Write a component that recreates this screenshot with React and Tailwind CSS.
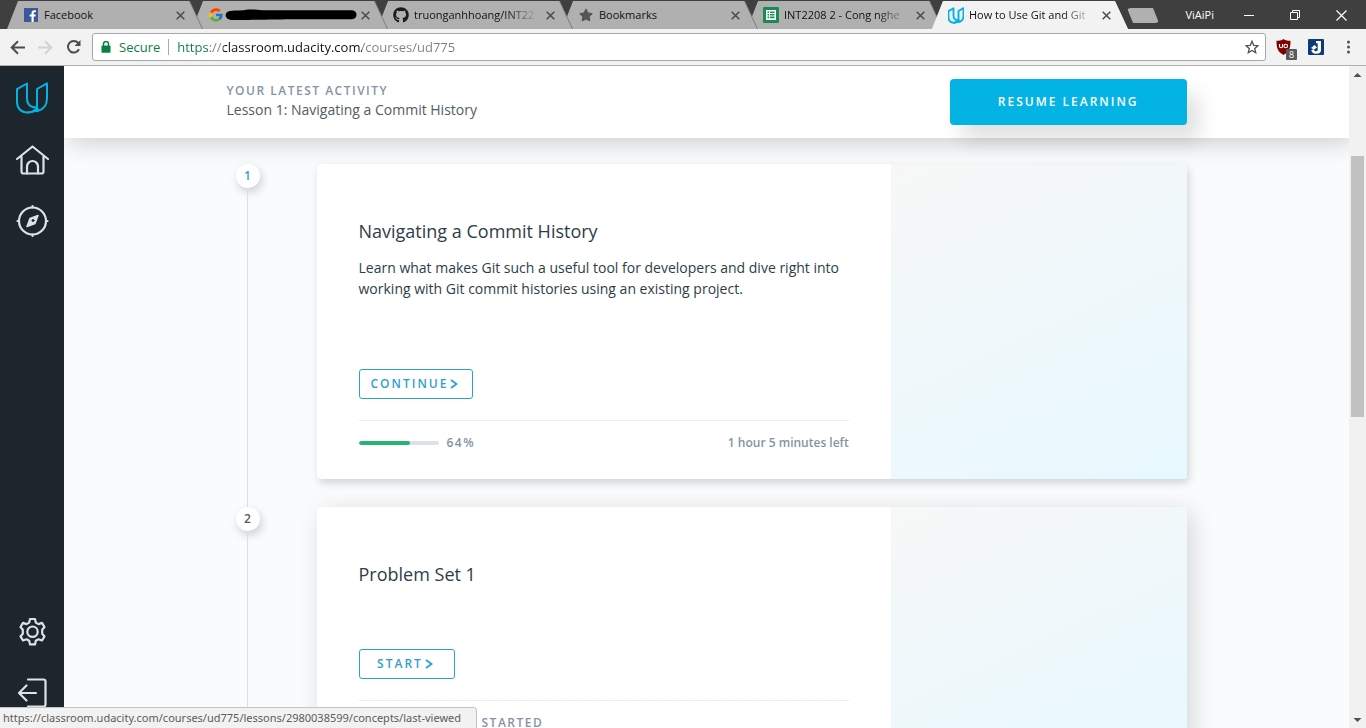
import React from "react";
import { FaGithub, FaStar } from "react-icons/fa";
import { FcGoogle } from "react-icons/fc";

function FacebookIcon() {
  return (
    <svg width="14" height="14" viewBox="0 0 14 14" aria-hidden="true">
      <rect width="14" height="14" fill="#3b5998" />
      <path d="M9.7 14V8.6h1.8l.3-2.1H9.7V5.2c0-.6.2-1 1-1h1.2V2.3c-.2 0-.9-.1-1.6-.1-1.7 0-2.8 1-2.8 2.8v1.5H5.6v2.1h1.9V14z" fill="#fff" />
    </svg>
  );
}

function SheetsIcon() {
  return (
    <svg width="16" height="16" viewBox="0 0 16 16" aria-hidden="true">
      <rect width="16" height="16" rx="1" fill="#188a52" />
      <rect x="3" y="3" width="10" height="10" fill="#fff" />
      <path d="M4.500 4.500h1.500v1.500h-1.500zM7 4.500h4.500v1.500H7zM4.500 7h1.500v1.500h-1.500zM7 7h4.500v1.500H7zM4.500 9.600h1.500v1.600h-1.500zM7 9.600h4.500v1.600H7z" fill="#188a52" />
    </svg>
  );
}

function UdacityMark({ size, stroke }) {
  return (
    <svg width={size} height={size} viewBox="0 0 32 32" fill="none" stroke="#02b3e4" strokeWidth={stroke} strokeLinejoin="round" strokeLinecap="round" aria-hidden="true">
      <path d="M11 1.500v15c0 6 4 9 10 9-2 3-5.500 5-9.500 5C5 30.500 1 26 1 20V7.200z" />
      <path d="M31 1.500v15c0 6.500-3.500 11.500-10 13V7.200z" transform="translate(0 -.2)" />
      <path d="M11.500 30.500c6-.5 9-1.500 11-3" />
    </svg>
  );
}

const tabs = [
  { title: "Facebook", icon: <FacebookIcon /> },
  { title: "", icon: <FcGoogle size={16} />, struck: true },
  { title: "truonganhhoang/INT22", icon: <FaGithub size={16} color="#1c1c1c" />, fade: true },
  { title: "Bookmarks", icon: <FaStar size={14} color="#555" /> },
  { title: "INT2208 2 - Cong nghe", icon: <SheetsIcon />, fade: true },
  { title: "How to Use Git and Git", icon: <UdacityMark size={17} stroke={3.8} />, fade: true, active: true },
];

const stacking = ["z-[5]", "z-[4]", "z-[3]", "z-[2]", "z-[1]", "z-[6]"];
const tabShape = "[clip-path:polygon(11px_0,calc(100%_-_13px)_0,100%_100%,0_100%)]";

function Tab({ tab, index }) {
  return (
    <div className={`relative -mr-[11px] h-7 w-[196px] min-w-0 ${tabShape} ${stacking[index]} ${tab.active ? "bg-[#f2f2f2]" : "bg-[#7c7c7c]"}`}>
      <div className={`flex h-full items-center pr-[17px] pl-4 ${tabShape} ${tab.active ? "bg-[#f2f2f2]" : "mr-px bg-[#b0b0b0]"}`}>
        <button type="button" aria-label={tab.title || "Google"} className="flex min-w-0 flex-1 items-center gap-[5px] text-left">
          <span className="flex w-4 shrink-0 justify-center">{tab.icon}</span>
          {tab.struck ? (
            <svg width="134" height="12" viewBox="0 0 134 12" className="-mr-1 -ml-1 shrink-0" aria-hidden="true">
              <path d="M5 2c6-1 12 0 18-1.500 8-.5 10 .8 18 .8h86c6 0 6 9 0 9H60c-6 .5-10 0-16 .2-8 .5-14-.2-20 .6H6C-1 10-1 3 5 2z" fill="#000" />
            </svg>
          ) : (
            <span className={`min-w-0 flex-1 text-[11px] whitespace-nowrap text-[#111] ${tab.fade ? "[mask-image:linear-gradient(to_right,#000_75%,transparent)]" : ""}`}>
              {tab.title}
            </span>
          )}
        </button>
        <button type="button" aria-label="Close tab" className="ml-2 shrink-0">
          <svg width="9" height="9" viewBox="0 0 9 9" stroke="#4a4a4a" strokeWidth="1.500" aria-hidden="true">
            <path d="M.7.7l7.600 7.600M8.300.7L.7 8.300" />
          </svg>
        </button>
      </div>
    </div>
  );
}

function TabStrip() {
  return (
    <div className="flex h-[29px] shrink-0 items-start bg-[#3f3f3f] pt-px pl-[7px]">
      {tabs.map((tab, i) => (
        <Tab key={i} tab={tab} index={i} />
      ))}
      <button type="button" aria-label="New tab" className="mt-[7px] ml-2.5 h-[15px] w-8 rounded-sm bg-[#b0b0b0] [clip-path:polygon(0_0,26px_0,100%_100%,6px_100%)]" />
      <div className="ml-auto flex h-full items-center pr-0.5 text-white">
        <span className="mr-3 text-[11px]">ViAiPi</span>
        <button type="button" aria-label="Minimize" className="flex w-[46px] justify-center">
          <svg width="10" height="11" viewBox="0 0 10 11" stroke="#fff"><path d="M0 5.500h10" /></svg>
        </button>
        <button type="button" aria-label="Restore" className="flex w-[46px] justify-center">
          <svg width="11" height="11" viewBox="0 0 11 11" fill="none" stroke="#fff"><path d="M.5 2.500h7v7h-7zM2.500 2.500v-2h7v7h-2" /></svg>
        </button>
        <button type="button" aria-label="Close" className="flex w-[46px] justify-center">
          <svg width="11" height="11" viewBox="0 0 11 11" stroke="#fff" strokeWidth="1.200"><path d="M.5.5l10 10M10.500.5l-10 10" /></svg>
        </button>
      </div>
    </div>
  );
}

function Toolbar() {
  return (
    <div className="flex h-[37px] shrink-0 items-center border-b border-[#b0b0b0] bg-[#f2f2f2] pl-2.5">
      <button type="button" aria-label="Back" className="flex w-7">
        <svg width="15" height="15" viewBox="0 0 15 15" fill="none" stroke="#4d4d4d" strokeWidth="2"><path d="M15 7.500H2M8 1.200L1.700 7.500 8 13.800" /></svg>
      </button>
      <button type="button" aria-label="Forward" className="flex w-7">
        <svg width="15" height="15" viewBox="0 0 15 15" fill="none" stroke="#d2d2d2" strokeWidth="2"><path d="M0 7.500h13M7 1.200l6.300 6.300L7 13.800" /></svg>
      </button>
      <button type="button" aria-label="Reload" className="flex w-[26px]">
        <svg width="16" height="16" viewBox="0 0 16 16" fill="none" stroke="#4d4d4d" strokeWidth="2"><path d="M13 10.300A5.800 5.800 0 1 1 12.200 4" /><path d="M14.500 1v6H8.500z" fill="#4d4d4d" stroke="none" /></svg>
      </button>
      <div className="flex h-7 min-w-0 flex-1 items-center rounded-[3px] border border-[#a6a6a6] bg-white pr-1.5 pl-2 text-sm">
        <svg width="10" height="12" viewBox="0 0 10 12" className="mr-2 shrink-0" aria-hidden="true">
          <path d="M2.500 5V3a2.500 2.500 0 0 1 5 0v2" fill="none" stroke="#0b8043" strokeWidth="1.500" />
          <rect x=".5" y="4.500" width="9" height="7.300" rx=".8" fill="#0b8043" />
        </svg>
        <label htmlFor="address" className="text-[13px] text-[#0b8043]">Secure</label>
        <span className="mx-2 h-4 w-px bg-[#aaa]" />
        <input
          id="address"
          type="text"
          defaultValue="https://classroom.udacity.com/courses/ud775"
          className="min-w-0 flex-1 bg-[linear-gradient(to_right,#0b8043_0_33px,#808080_33px_46px,#111_46px_185px,#808080_185px)] bg-clip-text text-[13px] text-transparent caret-black outline-none"
        />
        <button type="button" aria-label="Bookmark this page" className="shrink-0">
          <svg width="14" height="14" viewBox="0 0 14 14" fill="none" stroke="#505050" strokeWidth="1.300"><path d="M7 1.300l1.700 4 4.300.4-3.300 2.800 1 4.200L7 10.500l-3.700 2.200 1-4.200L1 5.700l4.300-.4z" /></svg>
        </button>
      </div>
      <div className="ml-2.5 flex shrink-0 items-center">
        <button type="button" aria-label="uBlock Origin" className="relative h-5 w-5">
          <svg width="15" height="16" viewBox="0 0 15 16" aria-hidden="true">
            <path d="M7.500 0c2 1.500 4.500 1.800 7 1.800 0 6.200-.5 10.700-7 14.200C1 12.500.5 8 .5 1.800c2.500 0 5-.3 7-1.800z" fill="#800000" />
            <path d="M3.500 5v2.200a1.500 1.500 0 0 0 3 0V5" fill="none" stroke="#fff" strokeWidth="1.100" />
            <circle cx="9.700" cy="7" r="1.800" fill="none" stroke="#fff" strokeWidth="1.100" />
          </svg>
          <span className="absolute top-3 left-2.5 flex h-[11px] w-[11px] items-center justify-center rounded-[1px] bg-[#5a5a5a] text-[9px] leading-none text-white">8</span>
        </button>
        <button type="button" aria-label="Extension" className="ml-3">
          <svg width="16" height="16" viewBox="0 0 16 16" aria-hidden="true">
            <rect width="16" height="16" rx="1" fill="#0c3c78" />
            <path d="M8 2h5v9.200c0 2.400-1.800 3.600-4.500 3.600-2.500 0-4.700-1-5.300-3.400L5.700 10c.3 1.700 1.300 2.300 2.300 2.300 1.200 0 1.700-.6 1.700-1.700V4.300H8z" fill="#fff" />
            <path d="M3 9l3.500-3L9 8.500l-3 2z" fill="#fff" />
          </svg>
        </button>
        <button type="button" aria-label="Menu" className="mr-4 ml-[23px]">
          <svg width="3" height="14" viewBox="0 0 3 14" fill="#505050" aria-hidden="true"><circle cx="1.500" cy="2" r="1.500" /><circle cx="1.500" cy="7" r="1.500" /><circle cx="1.500" cy="12" r="1.500" /></svg>
        </button>
      </div>
    </div>
  );
}

const sideStroke = { fill: "none", stroke: "#dbe2e8", strokeWidth: 2, strokeLinecap: "round", strokeLinejoin: "round" };

function Sidebar() {
  return (
    <nav aria-label="Main" className="flex w-16 shrink-0 flex-col items-center bg-[#1e262d] pt-4">
      <a href="#udacity" aria-label="Udacity"><UdacityMark size={32} stroke={2} /></a>
      <a href="#home" aria-label="Home" className="mt-7">
        <svg width="34" height="34" viewBox="0 0 34 34" {...sideStroke} strokeWidth="2.200">
          <path d="M2 17L17.500 4.500 33 17M6.500 14.500v15a2 2 0 0 0 2 2h18a2 2 0 0 0 2-2v-15" />
          <path d="M12 31.500v-7a5.500 5.500 0 0 1 11 0v7" />
        </svg>
      </a>
      <a href="#catalog" aria-label="Catalog" className="mt-7">
        <svg width="34" height="34" viewBox="0 0 34 34" {...sideStroke} strokeWidth="2.200">
          <circle cx="17.500" cy="17" r="13.500" />
          <path d="M17.500 2v1.500M17.500 30.500V32M2.500 17H4M31 17h1.500" />
          <path d="M23 11.500l-3 8-8 3 3-8z" fill="#dbe2e8" strokeWidth="1.500" />
          <circle cx="18" cy="16.500" r="1" fill="#1e262d" stroke="#1e262d" strokeWidth="1" />
        </svg>
      </a>
      <a href="#settings" aria-label="Settings" className="mt-auto">
        <svg width="30" height="30" viewBox="0 0 30 30" {...sideStroke} strokeWidth="2.200">
          <path d="M13 3h5l.8 3.600 2.700 1.500 3.500-1.200 2.500 4.100-2.300 2.700v4l2.300 2.700-2.500 4.100-3.500-1.200-2.700 1.500-.8 3.600h-5l-.8-3.600-2.700-1.500L6 24.500l-2.500-4.100 2.300-2.700v-4L3.500 11 6 6.900l3.500 1.200 2.700-1.500z" />
          <circle cx="15.500" cy="15.700" r="5.200" />
        </svg>
      </a>
      <a href="#signout" aria-label="Sign out" className="mt-8 mb-5">
        <svg width="30" height="30" viewBox="0 0 30 30" {...sideStroke} strokeWidth="2.200">
          <path d="M11 1.500h15.500a2 2 0 0 1 2 2v23a2 2 0 0 1-2 2H11" />
          <path d="M19 15H2M9.500 7.500L2 15l7.500 7.500" />
        </svg>
      </a>
    </nav>
  );
}

const lessons = [
  {
    title: "Navigating a Commit History",
    text: "Learn what makes Git such a useful tool for developers and dive right into working with Git commit histories using an existing project.",
    action: "CONTINUE",
    progress: 64,
    status: "64%",
    left: "1 hour 5 minutes left",
    current: true,
  },
  { title: "Problem Set 1", action: "START", progress: 0, status: "STARTED" },
];

function Lesson({ lesson, number }) {
  return (
    <li className="flex gap-12">
      <div className="flex w-[42px] shrink-0 flex-col items-center">
        <span className={`flex h-6 w-6 items-center justify-center rounded-full bg-white text-xs font-semibold shadow-[2px_4px_10px_rgba(0,0,0,0.18)] ${lesson.current ? "text-[#3a9fc4]" : "text-[#525c65]"}`}>
          {number}
        </span>
        <span className="w-px flex-1 bg-[#dbdfe3]" />
      </div>
      <div className="min-w-0 flex-1 pb-7">
        <article className={`flex overflow-hidden rounded bg-white ${lesson.current ? "shadow-[2px_4px_8px_rgba(46,61,73,0.2)]" : "shadow-[5px_5px_25px_rgba(0,0,0,0.15)]"}`}>
          <div className="flex min-w-0 flex-1 flex-col px-[42px] pt-[54px] pb-[26px]">
            <h2 className="text-lg leading-[27px] text-[#2e3d49]">{lesson.title}</h2>
            {lesson.text && <p className="mt-3 mb-[9px] text-sm leading-[21px] text-[#2e3d49]">{lesson.text}</p>}
            <button type="button" className="mt-[61px] flex h-[30px] min-w-24 items-center justify-center gap-0.5 self-start rounded-[3px] border border-[#2ea1c6] pr-3.5 pl-[11px] text-xs font-semibold tracking-[2px] text-[#2f9fce]">
              {lesson.action}
              <svg width="8" height="10" viewBox="0 0 8 10" fill="none" stroke="#2f9fce" strokeWidth="1.800" aria-hidden="true"><path d="M1 1l5.500 4L1 9" /></svg>
            </button>
            <div className="mt-[21px] flex items-center border-t border-[#ebedef] pt-3 text-xs leading-5 font-semibold text-[#8494a5]">
              <div className="mr-2 h-1 w-20 overflow-hidden rounded-full bg-[#dbe2e8]">
                <div className="h-full rounded-full bg-[#24b670]" style={{ width: `${lesson.progress}%` }} />
              </div>
              <span className={`tracking-[0.125em] ${lesson.progress ? "" : "pl-[35px]"}`}>{lesson.status}</span>
              {lesson.left && <span className="ml-auto">{lesson.left}</span>}
            </div>
          </div>
          <div className="w-[34%] shrink-0 bg-[linear-gradient(155deg,#f7f7f7,#e7f9ff)]" />
        </article>
      </div>
    </li>
  );
}

function Scrollbar() {
  return (
    <div className="flex w-[17px] shrink-0 flex-col items-center bg-[#f1f1f1]">
      <svg width="17" height="17" viewBox="0 0 17 17" aria-hidden="true"><path d="M8.500 7l4 4h-8z" fill="#505050" /></svg>
      <div className="flex w-[13px] flex-1 flex-col">
        <div className="h-[11.6%]" />
        <div className="h-[41.6%] bg-[#c1c1c1]" />
      </div>
      <svg width="17" height="17" viewBox="0 0 17 17" aria-hidden="true"><path d="M8.500 11l4-4h-8z" fill="#505050" /></svg>
    </div>
  );
}

export default function App() {
  return (
    <div className="relative flex h-screen flex-col overflow-hidden font-['Open_Sans','Noto_Sans',sans-serif]">
      <TabStrip />
      <Toolbar />
      <div className="flex min-h-0 flex-1">
        <Sidebar />
        <main className="flex min-w-0 flex-1 flex-col overflow-hidden bg-[#fafbfc]">
          <header className="relative z-10 shrink-0 bg-white shadow-[5px_5px_25px_rgba(0,0,0,0.18)]">
            <div className="mx-auto flex h-[72px] max-w-[960px] items-center justify-between">
              <div className="pb-0.5">
                <p className="text-xs leading-[18px] font-semibold tracking-[0.125em] text-[#8494a5]">YOUR LATEST ACTIVITY</p>
                <p className="text-sm leading-5 text-[#525c65]">Lesson 1: Navigating a Commit History</p>
              </div>
              <button type="button" className="h-[46px] rounded bg-[#02b3e4] px-12 text-xs font-semibold tracking-[2px] text-white shadow-[12px_15px_20px_rgba(0,0,0,0.12)]">
                RESUME LEARNING
              </button>
            </div>
          </header>
          <ol className="mx-auto w-full max-w-[960px] pt-[26px]">
            {lessons.map((lesson, i) => (
              <Lesson key={lesson.title} lesson={lesson} number={i + 1} />
            ))}
          </ol>
        </main>
        <Scrollbar />
      </div>
      <div className="absolute bottom-0 left-0 z-20 h-[21px] w-[477px] rounded-tr border-t border-r border-[#c4c4c4] bg-[#f2f2f2] pl-[3px] font-['Noto_Sans',sans-serif] text-[11px] leading-5 text-[#5c5c5c]">
        https://classroom.udacity.com/courses/ud775/lessons/2980038599/concepts/last-viewed
      </div>
    </div>
  );
}
